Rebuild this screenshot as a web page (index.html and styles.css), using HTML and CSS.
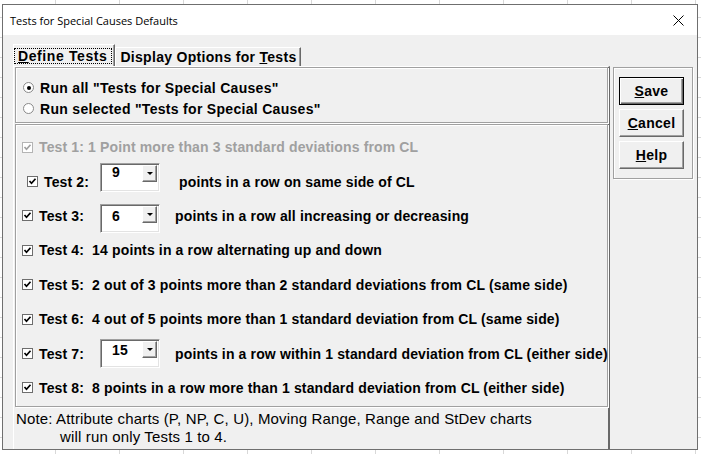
FILE: index.html
```html
<!DOCTYPE html>
<html lang="en">
<head>
    <meta charset="UTF-8">
    <title>Tests for Special Causes Defaults</title>
    <link rel="stylesheet" href="styles.css">
</head>
<body>
    <div class="window">
        <div class="titlebar">
            <span class="title">Tests for Special Causes Defaults</span>
            <svg class="close" width="11" height="11" viewBox="0 0 11 11">
                <path d="M0.5 0.5 L10.5 10.5 M10.5 0.5 L0.5 10.5" stroke="#000" stroke-width="1" fill="none"/>
            </svg>
        </div>

        <div class="client">
            <div class="main">
                <div class="tabs">
                    <div class="tab active"><span class="focus"><u>D</u>efine Tests</span></div>
                    <div class="tab">Display Options for <u>T</u>ests</div>
                </div>

                <div class="panel">
                    <div class="frame radios">
                        <div class="radio-row"><span class="radio on"></span>Run all "Tests for Special Causes"</div>
                        <div class="radio-row"><span class="radio"></span>Run selected "Tests for Special Causes"</div>
                    </div>

                    <div class="frame tests">
                        <div class="test-row disabled">
                            <span class="check"><svg width="9" height="9" viewBox="0 0 9 9"><path d="M1.5 4 L3.5 6.2 L7.5 1.8" stroke="#a0a0a0" stroke-width="1.7" fill="none"/></svg></span>
                            <span>Test 1: 1 Point more than 3 standard deviations from CL</span>
                        </div>
                        <div class="test-row t2">
                            <span class="check"><svg width="9" height="9" viewBox="0 0 9 9"><path d="M1.5 4 L3.5 6.2 L7.5 1.8" stroke="#000" stroke-width="1.7" fill="none"/></svg></span>
                            <span class="label">Test 2:</span>
                            <span class="combo"><span class="value">9</span><span class="drop"></span></span>
                            <span class="desc">points in a row on same side of CL</span>
                        </div>
                        <div class="test-row t3">
                            <span class="check"><svg width="9" height="9" viewBox="0 0 9 9"><path d="M1.5 4 L3.5 6.2 L7.5 1.8" stroke="#000" stroke-width="1.7" fill="none"/></svg></span>
                            <span class="label">Test 3:</span>
                            <span class="combo"><span class="value">6</span><span class="drop"></span></span>
                            <span class="desc">points in a row all increasing or decreasing</span>
                        </div>
                        <div class="test-row">
                            <span class="check"><svg width="9" height="9" viewBox="0 0 9 9"><path d="M1.5 4 L3.5 6.2 L7.5 1.8" stroke="#000" stroke-width="1.7" fill="none"/></svg></span>
                            <span>Test 4:&nbsp; 14 points in a row alternating up and down</span>
                        </div>
                        <div class="test-row">
                            <span class="check"><svg width="9" height="9" viewBox="0 0 9 9"><path d="M1.5 4 L3.5 6.2 L7.5 1.8" stroke="#000" stroke-width="1.7" fill="none"/></svg></span>
                            <span>Test 5:&nbsp; 2 out of 3 points more than 2 standard deviations from CL (same side)</span>
                        </div>
                        <div class="test-row">
                            <span class="check"><svg width="9" height="9" viewBox="0 0 9 9"><path d="M1.5 4 L3.5 6.2 L7.5 1.8" stroke="#000" stroke-width="1.7" fill="none"/></svg></span>
                            <span>Test 6:&nbsp; 4 out of 5 points more than 1 standard deviation from CL (same side)</span>
                        </div>
                        <div class="test-row t7">
                            <span class="check"><svg width="9" height="9" viewBox="0 0 9 9"><path d="M1.5 4 L3.5 6.2 L7.5 1.8" stroke="#000" stroke-width="1.7" fill="none"/></svg></span>
                            <span class="label">Test 7:</span>
                            <span class="combo"><span class="value">15</span><span class="drop"></span></span>
                            <span class="desc">points in a row within 1 standard deviation from CL (either side)</span>
                        </div>
                        <div class="test-row">
                            <span class="check"><svg width="9" height="9" viewBox="0 0 9 9"><path d="M1.5 4 L3.5 6.2 L7.5 1.8" stroke="#000" stroke-width="1.7" fill="none"/></svg></span>
                            <span>Test 8:&nbsp; 8 points in a row more than 1 standard deviation from CL (either side)</span>
                        </div>
                    </div>

                    <div class="note">
                        <div>Note: Attribute charts (P, NP, C, U), Moving Range, Range and StDev charts</div>
                        <div class="indent">will run only Tests 1 to 4.</div>
                    </div>
                </div>
            </div>

            <div class="side">
                <div class="button-frame">
                    <button class="btn default"><u>S</u>ave</button>
                    <button class="btn"><u>C</u>ancel</button>
                    <button class="btn"><u>H</u>elp</button>
                </div>
            </div>
        </div>
    </div>
</body>
</html>
```

FILE: styles.css
```css
body {
    margin: 0;
    width: 701px;
    height: 454px;
    overflow: hidden;
    background-color: #fff;
    background-image:
        linear-gradient(to right, #d8d8d8 1px, transparent 1px),
        linear-gradient(to bottom, #d8d8d8 1px, transparent 1px);
    background-size: 64px 100%, 100% 20px;
    background-position: 55px 0, 0 17px;
    font-family: "Liberation Sans", Arial, sans-serif;
    color: #000;
}

.window {
    margin: 4px 0 0 2px;
    width: 694px;
    height: 444px;
    border: 1px solid #6f6f6f;
    background: #f0f0f0;
    display: flex;
    flex-direction: column;
}

.titlebar {
    height: 30px;
    background: #fff;
    display: flex;
    align-items: center;
    justify-content: space-between;
    padding: 0 13px 0 7px;
}

.title {
    font-family: "Open Sans", "Noto Sans", sans-serif;
    font-size: 11px;
}

.client {
    flex: 1;
    display: flex;
}

.main {
    margin: 8px 0 0 10px;
    width: 597px;
    display: flex;
    flex-direction: column;
}

/* tabs */
.tabs {
    display: flex;
    align-items: flex-end;
    height: 23px;
    font-size: 14px;
    font-weight: bold;
    letter-spacing: 0.3px;
}

.tab {
    height: 18px;
    line-height: 18px;
    padding: 0 3px 0 4px;
    border-top: 1px solid #fff;
    border-left: 1px solid #fff;
    border-right: 1px solid #696969;
    box-shadow: inset -1px 0 #a0a0a0;
}

.tab.active {
    box-sizing: border-box;
    height: 23px;
    padding: 3px 2px 0 0;
    margin-bottom: -1px;
    background: #f0f0f0;
    letter-spacing: 0.6px;
}

.focus {
    display: block;
    line-height: 14px;
    padding: 0 4px 0 3px;
    border: 1px dotted #000;
}

.panel {
    flex: 1;
    border-top: 1px solid #fff;
    border-left: 1px solid #fff;
    border-right: 2px solid #696969;
    display: flex;
    flex-direction: column;
}

.frame {
    margin-left: 1px;
    border: 1px solid #a0a0a0;
    box-shadow: inset 1px 1px #fff, 1px 1px #fff;
    font-size: 14px;
    font-weight: bold;
    letter-spacing: 0.3px;
}

.radios {
    height: 45px;
    padding: 9px 0 0 7px;
}

.radio-row {
    height: 21px;
    display: flex;
    align-items: center;
}

.radio {
    width: 9px;
    height: 9px;
    border: 1px solid #8a8a8a;
    border-radius: 50%;
    background: #fff;
    margin-right: 6px;
    display: flex;
    align-items: center;
    justify-content: center;
}

.radio.on::after {
    content: "";
    width: 4px;
    height: 4px;
    border-radius: 50%;
    background: #000;
}

.tests {
    margin-top: 1px;
    height: 276px;
    padding: 5px 0 0 6px;
    display: grid;
    grid-template-rows: repeat(8, 34.4px);
    letter-spacing: 0.14px;
}

.test-row {
    display: flex;
    align-items: center;
    white-space: nowrap;
}

.test-row.disabled {
    color: #a0a0a0;
}

.check {
    width: 9px;
    height: 9px;
    border: 1px solid #6d6d6d;
    background: #fff;
    margin-right: 6px;
    display: flex;
    flex-shrink: 0;
}

.disabled .check {
    border-color: #b4b4b4;
}

.label {
    width: 61px;
}

/* combo boxes */
.combo {
    align-self: flex-start;
    box-sizing: border-box;
    width: 60px;
    height: 29px;
    background: #fff;
    border-top: 1px solid #a0a0a0;
    border-left: 1px solid #a0a0a0;
    border-right: 1px solid #fff;
    border-bottom: 1px solid #fff;
    box-shadow: inset 1px 1px #696969, inset -1px -1px #e3e3e3;
    display: flex;
    justify-content: space-between;
    align-items: flex-start;
    padding: 1px 2px 0 11px;
}

.value {
    line-height: 14px;
    padding-top: 2px;
}

.drop {
    box-sizing: border-box;
    width: 15px;
    height: 17px;
    background: #f0f0f0;
    border-top: 1px solid #fff;
    border-left: 1px solid #fff;
    border-right: 1px solid #696969;
    border-bottom: 1px solid #696969;
    box-shadow: inset -1px -1px #a0a0a0;
    display: flex;
    align-items: center;
    justify-content: center;
}

.drop::after {
    content: "";
    border-left: 3px solid transparent;
    border-right: 3px solid transparent;
    border-top: 3px solid #000;
}

.desc {
    margin-left: 15px;
}

.t2 .check {
    margin-left: 5px;
}

.t2 .label {
    width: 56px;
}

.t2 .combo {
    margin-top: -1px;
}

.t2 .value {
    padding-top: 0;
}

.t2 .desc {
    margin-left: 19px;
}

.t3 .combo {
    margin-top: 5px;
}

.t3 .value {
    padding-top: 3px;
}

.t7 .combo {
    margin-top: 3px;
}

.note {
    padding: 3px 0 0 2px;
    font-size: 15px;
    letter-spacing: 0.15px;
    line-height: 18px;
}

.note .indent {
    padding-left: 44px;
}

/* buttons */
.side {
    margin: 32px 0 0 3px;
}

.button-frame {
    width: 68px;
    border: 1px solid #a0a0a0;
    box-shadow: inset 1px 1px #fff, 1px 1px #fff;
    padding: 9px 5px 9px 5px;
    display: flex;
    flex-direction: column;
    gap: 4px;
}

.btn {
    height: 28px;
    width: 65px;
    padding: 0;
    font-family: "Liberation Sans", Arial, sans-serif;
    font-size: 14px;
    font-weight: bold;
    letter-spacing: 0.3px;
    color: #000;
    background: #f0f0f0;
    border-top: 1px solid #fff;
    border-left: 1px solid #fff;
    border-right: 1px solid #696969;
    border-bottom: 1px solid #696969;
    box-shadow: inset -1px -1px #a0a0a0;
}

.btn.default {
    border: 1px solid #000;
    box-shadow: inset 1px 1px #fff, inset -1px -1px #696969, inset -2px -2px #a0a0a0;
}
```
